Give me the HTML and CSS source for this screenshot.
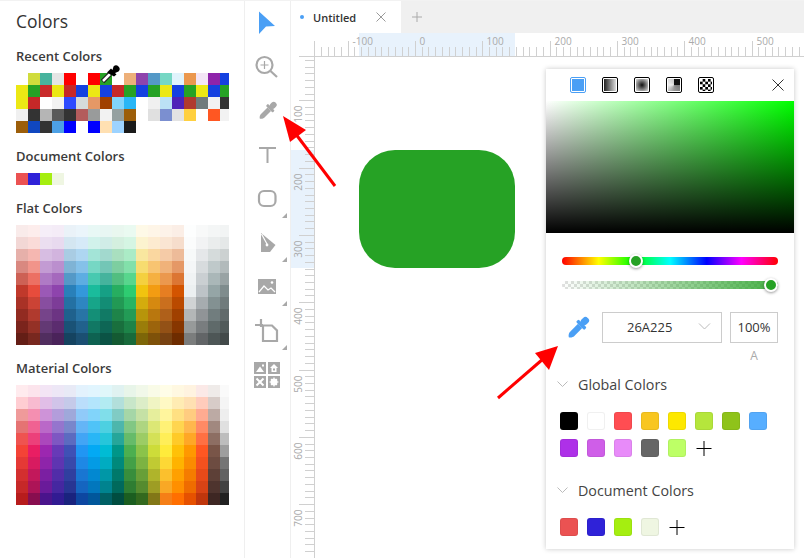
FILE: index.html
```html
<!DOCTYPE html>
<html>
<head>
  <meta charset="utf-8">
  <title>Colors</title>
  <link rel="stylesheet" href="styles.css">
</head>
<body>
  <svg class="defs" width="0" height="0">
    <symbol id="dropper" viewBox="0 0 24 24">
      <g transform="rotate(45 12 12)">
        <rect x="8.5" y="-2" width="7" height="8.500" rx="3.200"/>
        <rect x="6.200" y="5.500" width="11.600" height="3.600" rx="1.200"/>
        <path d="M9 9h6v11.500c0 1-1 3.500-3 4.500-2-1-3-3.500-3-4.500z"/>
      </g>
    </symbol>
  </svg>

  <div class="app">
    <aside class="side">
      <h1>Colors</h1>
      <h2>Recent Colors</h2>
      <div class="grid" id="recent"></div>
      <h2>Document Colors</h2>
      <div class="grid" id="docs"></div>
      <h2>Flat Colors</h2>
      <div class="grid" id="flat"></div>
      <h2>Material Colors</h2>
      <div class="grid" id="material"></div>
    </aside>

    <nav class="tools">
      <svg viewBox="0 0 45 44"><path class="blue" d="M14 11.500 30 26 21 26.500 14 34z"/></svg>
      <svg viewBox="0 0 45 44">
        <circle class="line" cx="19.500" cy="21" r="8"/>
        <path class="line" d="M25.500 27 32 33"/>
        <path class="thin" d="M19.500 17v8M15.500 21h8"/>
      </svg>
      <svg viewBox="0 0 45 44"><use href="#dropper" class="gray" x="12.500" y="13" width="20" height="20"/></svg>
      <svg viewBox="0 0 45 44"><path class="gray" d="M14 15h17v2H23.500v14h-2V17H14z"/></svg>
      <svg viewBox="0 0 45 44">
        <rect class="line" x="14" y="15" width="16.500" height="15" rx="5"/>
        <path class="gray" d="M42 37v5h-5z"/>
      </svg>
      <svg viewBox="0 0 45 44">
        <path class="gray" d="M16 13 30.500 25 25 32H16z"/>
        <path class="nib" d="M16.500 14 22 24"/>
        <circle class="dot" cx="22" cy="25" r="1.400"/>
        <path class="gray" d="M42 37v5h-5z"/>
      </svg>
      <svg viewBox="0 0 45 44">
        <rect class="gray" x="13" y="15" width="18" height="15"/>
        <path class="nib" d="M14 28 19 22 23 26 26 24 30 28"/>
        <circle class="dot" cx="27" cy="18.500" r="1.300"/>
        <path class="gray" d="M42 37v5h-5z"/>
      </svg>
      <svg viewBox="0 0 45 44">
        <path class="line" d="M10 17h8M16 11v8M18 17.500h9l5 5V33H18z"/>
        <path class="gray" d="M42 37v5h-5z"/>
      </svg>
      <svg viewBox="0 0 45 44">
        <rect class="gray" x="9" y="10" width="12" height="12"/>
        <rect class="gray" x="23" y="10" width="12" height="12"/>
        <rect class="gray" x="9" y="24" width="12" height="12"/>
        <rect class="gray" x="23" y="24" width="12" height="12"/>
        <path class="dot" d="M11 20 15 14.500 19 20zM17 12.500h2v2h-2zM29 12 33 16H31.500V20H26.500V16H25z"/>
        <rect class="gap" x="28" y="16.500" width="2" height="2"/>
        <path class="cross" d="M11.500 26.500l7 7M18.500 26.500l-7 7"/>
        <circle class="dot" cx="29" cy="30" r="3.500"/>
        <path class="nib" d="M29 25.500v9M24.500 30h9M26 27l6 6M32 27l-6 6"/>
      </svg>
    </nav>

    <main class="main">
      <div class="tabs">
        <div class="tab">
          <i class="tab-dot"></i>
          <span class="tab-name">Untitled</span>
          <svg class="tab-x" width="10" height="10" viewBox="0 0 10 10"><path d="M.5.5l9 9M9.500.5l-9 9"/></svg>
        </div>
        <svg class="tab-plus" width="10" height="10" viewBox="0 0 10 10"><path d="M5 0v10M0 5h10"/></svg>
      </div>

      <div class="board">
        <svg class="rulers" id="rulers" width="513" height="525"></svg>
        <div class="shape"></div>

        <section class="panel">
          <header class="modes">
            <span class="mode mode-on"><i class="fill-solid"></i></span>
            <span class="mode"><i class="fill-linear"></i></span>
            <span class="mode"><i class="fill-radial"></i></span>
            <span class="mode"><i class="fill-angle"></i></span>
            <span class="mode"><i class="fill-check"></i></span>
            <svg class="close" width="12" height="12" viewBox="0 0 12 12"><path d="M.5.5l11 11M11.500.5l-11 11"/></svg>
          </header>
          <div class="picker"></div>

          <div class="slider hue"><b class="thumb thumb-hue"></b></div>
          <div class="slider alpha"><b class="thumb thumb-alpha"></b></div>

          <div class="values">
            <svg class="pick" width="24" height="24"><use href="#dropper" width="24" height="24"/></svg>
            <div class="field hex">
              <span>26A225</span>
              <svg width="13" height="7" viewBox="0 0 13 7"><path d="M1 .5l5.500 5.500L12 .5"/></svg>
            </div>
            <div class="field pct">100%</div>
          </div>
          <div class="alpha-label">A</div>

          <div class="group-head">
            <svg width="11" height="6" viewBox="0 0 11 6"><path d="M.5.500 5.500 5.500 10.500.5"/></svg>
            <span>Global Colors</span>
          </div>
          <div class="chips">
            <i class="chip" style="background:#000"></i>
            <i class="chip" style="background:#fff"></i>
            <i class="chip" style="background:#ff4d52"></i>
            <i class="chip" style="background:#f8c620"></i>
            <i class="chip" style="background:#fde800"></i>
            <i class="chip" style="background:#b5e63c"></i>
            <i class="chip" style="background:#8fc31a"></i>
            <i class="chip" style="background:#57aeff"></i>
            <i class="chip" style="background:#ae30e8"></i>
            <i class="chip" style="background:#cf5ee8"></i>
            <i class="chip" style="background:#e88bf9"></i>
            <i class="chip" style="background:#666"></i>
            <i class="chip" style="background:#bdff66"></i>
            <svg class="add" width="18" height="18" viewBox="0 0 18 18"><path d="M1.500 9.500h15M9 2v15"/></svg>
          </div>

          <div class="group-head group-doc">
            <svg width="11" height="6" viewBox="0 0 11 6"><path d="M.5.500 5.500 5.500 10.500.5"/></svg>
            <span>Document Colors</span>
          </div>
          <div class="chips">
            <i class="chip" style="background:#eb5252"></i>
            <i class="chip" style="background:#2f22d8"></i>
            <i class="chip" style="background:#a5ee10"></i>
            <i class="chip" style="background:#eff6e2"></i>
            <svg class="add" width="18" height="18" viewBox="0 0 18 18"><path d="M1.500 9.500h15M9 2v15"/></svg>
          </div>
        </section>
      </div>
    </main>

    <!-- callouts and the cursor lie over everything -->
    <svg class="notes" width="804" height="558">
      <path class="red-line" d="M335 186 295 133"/>
      <path class="red" d="M283 116 306 130 290 142z"/>
      <path class="red-line" d="M498 398 543 359"/>
      <path class="red" d="M558 346 549 370 535 353z"/>
      <path class="cursor-out" d="M102.500 81.500 110 74"/>
      <path class="cursor-in" d="M103 81 110 74"/>
      <path class="cursor-head" d="M107 72.500 111 68.500 112.500 70 113.500 66.500a2.500 2.500 0 0 1 5 5L115 73 116.500 74.500 114 76.500z"/>
    </svg>
  </div>

  <script src="script.js"></script>
</body>
</html>
```

FILE: styles.css
```css
* {
  box-sizing: border-box;
}

body {
  margin: 0;
  background: #fff;
  font-family: "Open Sans", "Noto Sans", sans-serif;
  color: #333;
}

.defs {
  position: absolute;
}

.app {
  position: relative;
  display: flex;
  width: 804px;
  height: 558px;
  overflow: hidden;
  border-top: 1px solid #f2f2f2;
}

/* left panel */
.side {
  width: 245px;
  flex: none;
  padding: 8px 0 0 16px;
  border-right: 1px solid #efefef;
}

.side h1 {
  margin: 0;
  height: 24px;
  font-size: 17.5px;
  line-height: 24px;
  font-weight: 500;
  color: #333;
}

.side h2 {
  margin: 13px 0 7px;
  height: 20px;
  font-size: 13px;
  line-height: 20px;
  font-weight: 600;
  color: #3a3a3a;
}

.grid {
  display: grid;
  grid-template-columns: repeat(18, 12px);
  grid-auto-rows: 12px;
  width: 213px;
  overflow: hidden;
}

/* tools */
.tools {
  width: 46px;
  flex: none;
  display: flex;
  flex-direction: column;
  border-right: 1px solid #efefef;
  margin-top: -1px;
}

.tools svg {
  width: 45px;
  height: 44px;
  flex: none;
  display: block;
}

.blue {
  fill: #4a9ff5;
}

.gray {
  fill: #a8a8a8;
}

.line {
  fill: none;
  stroke: #a8a8a8;
  stroke-width: 2.2;
}

.thin {
  fill: none;
  stroke: #a8a8a8;
  stroke-width: 1.2;
}

.nib {
  fill: none;
  stroke: #fff;
  stroke-width: 1.2;
}

.cross {
  fill: none;
  stroke: #fff;
  stroke-width: 2;
}

.dot {
  fill: #fff;
}

.gap {
  fill: #a8a8a8;
}

/* tabs */
.main {
  flex: 1;
  display: flex;
  flex-direction: column;
  min-width: 0;
}

.tabs {
  height: 32px;
  flex: none;
  display: flex;
  align-items: center;
  background: #f0f0f0;
}

.tab {
  width: 110px;
  height: 32px;
  display: flex;
  align-items: center;
  background: #fff;
  padding-left: 9px;
}

.tab-dot {
  width: 4px;
  height: 4px;
  border-radius: 50%;
  background: #4a9ff5;
}

.tab-name {
  margin-left: 9px;
  font-size: 11px;
  font-weight: 600;
  color: #333;
}

.tab-x {
  margin-left: 20px;
}

.tab-x path {
  stroke: #999;
  fill: none;
}

.tab-plus {
  margin-left: 11px;
}

.tab-plus path {
  stroke: #aaa;
  fill: none;
}

/* canvas */
.board {
  position: relative;
  flex: 1;
}

.rulers {
  display: block;
}

.rulers line {
  stroke: #d0d0d0;
}

.rulers text {
  font-size: 10px;
  fill: #aaa;
}

.hl {
  fill: #e8f2fc;
}

.shape {
  position: absolute;
  left: 68px;
  top: 117px;
  width: 156px;
  height: 118px;
  border-radius: 36px;
  background: #26a225;
}

/* color popover */
.panel {
  position: absolute;
  left: 255px;
  top: 36px;
  width: 248px;
  height: 480px;
  background: #fff;
  box-shadow: 0 0 5px rgba(0, 0, 0, .22);
}

.modes {
  position: relative;
  height: 32px;
  display: flex;
  align-items: center;
  gap: 16px;
  padding: 0 0 0 24px;
}

.mode {
  width: 16px;
  height: 16px;
  padding: 1px;
  border: 1px solid #000;
  border-radius: 2px;
}

.mode i {
  display: block;
  width: 100%;
  height: 100%;
}

.mode-on {
  border-color: #4a9ff5;
}

.fill-solid {
  background: #4a9ff5;
}

.fill-linear {
  background: linear-gradient(to right, #222, #ddd);
}

.fill-radial {
  background: radial-gradient(circle, #111, #ccc 90%);
}

.fill-angle {
  background: conic-gradient(#111 0 25%, #777 25%, #999 50%, #eee 75%, #ccc 100%);
}

.fill-check {
  background: repeating-conic-gradient(#000 0 25%, #fff 0 50%) 0 0 / 5.300px 5.300px;
}

.close {
  position: absolute;
  right: 10px;
  top: 10px;
}

.close path {
  stroke: #333;
  fill: none;
}

.picker {
  height: 132px;
  background: linear-gradient(to bottom, transparent, #000), linear-gradient(to right, #fff, #0f0);
}

.slider {
  position: relative;
  height: 8px;
  margin: 0 16px;
  border-radius: 4px;
}

.hue {
  margin-top: 24px;
  background: linear-gradient(to right, #f00, #ff0 17%, #0f0 33%, #0ff 50%, #00f 67%, #f0f 83%, #f00);
}

.alpha {
  margin-top: 16px;
  background: linear-gradient(to right, rgba(38, 162, 37, 0), rgba(38, 162, 37, .85)), repeating-conic-gradient(#e0e0e0 0 25%, #fff 0 50%) 0 0 / 6px 6px;
}

.thumb {
  position: absolute;
  top: -3px;
  width: 14px;
  height: 14px;
  border: 2px solid #fff;
  border-radius: 50%;
  background: #26a225;
  box-shadow: 0 1px 3px rgba(0, 0, 0, .4);
}

.thumb-hue {
  left: 67px;
}

.thumb-alpha {
  left: 202px;
}

.values {
  display: flex;
  align-items: center;
  gap: 8px;
  height: 31px;
  margin: 23px 16px 0;
}

.pick {
  width: 24px;
  margin: 0 4px 0 4px;
  fill: #4a9ff5;
}

.field {
  height: 31px;
  border: 1px solid #ccc;
  font-size: 13px;
  line-height: 29px;
}

.hex {
  width: 120px;
  position: relative;
  padding-left: 24px;
}

.hex svg {
  position: absolute;
  right: 10px;
  top: 10px;
}

.hex path,
.group-head path {
  fill: none;
  stroke: #bbb;
}

.pct {
  width: 48px;
  text-align: center;
}

.alpha-label {
  width: 48px;
  margin: 6px 0 0 184px;
  text-align: center;
  font-size: 12px;
  line-height: 14px;
  color: #aaa;
}

.group-head {
  display: flex;
  align-items: center;
  gap: 10px;
  height: 20px;
  margin: 11px 0 18px 11px;
  font-size: 14.300px;
  color: #444;
}

.group-doc {
  margin-top: 23px;
}

.chips {
  display: grid;
  grid-template-columns: repeat(8, 18px);
  grid-auto-rows: 18px;
  gap: 9px;
  margin-left: 14px;
}

.chip {
  display: block;
  border-radius: 3px;
  border: 1px solid rgba(0, 0, 0, .06);
}

.add path {
  stroke: #000;
  fill: none;
}

/* notes */
.notes {
  position: absolute;
  left: 0;
  top: -1px;
  pointer-events: none;
}

.red {
  fill: #f00;
}

.red-line {
  stroke: #f00;
  stroke-width: 3;
  fill: none;
}

.cursor-out {
  stroke: #222;
  stroke-width: 5;
  fill: none;
}

.cursor-in {
  stroke: #fff;
  stroke-width: 2.500;
  fill: none;
}

.cursor-head {
  fill: #000;
}
```

FILE: script.js
```js
// palette tables, one string per row or column
var recent = [
  '#fff #d0dc3c #47b39d #e5e5e5 #f00 #fff #f00 #26a225 #fff #edb07a #8e44ad #5499c7 #76d7c4 #e0f3fc #eb984e #f3e5f5 #8e24aa #1541e0',
  '#ece814 #26a225 #c92a2a #ece814 #c62828 #1541e0 #ece814 #1541e0 #c62828 #26a225 #1541e0 #26a225 #ece814 #1541e0 #26a225 #ece814 #1541e0 #26a225',
  '#ece814 #c62828 #fff #f2f2f2 #2d4bff #d5dbdb #e59866 #a04000 #81d4fa #29b6f6 #fff #f0f0f0 #bbe1f5 #4f22b8 #b03a2e #707b7c #f2f2f2 #333',
  '#f0f0f0 #333 #b5b5b5 #595959 #333 #b35c5c #999b9b #f2f2f2 #95a0a0 #9c5e0a #fff #e0e0e0 #7b8fd0 #e3e3e3 #ffd040 #fff #ff5722 #f2f2f2',
  '#9c5e0a #1047c0 #333 #4da0e5 #00f #fff #00f #ffe0b2 #9dd3ff #1a1a1a'
];

var flat = [
  'F9EBEA F2D7D5 E6B0AA D98880 CD6155 C0392B A93226 922B21 7B241C 641E16',
  'FDEDEC FADBD8 F5B7B1 F1948A EC7063 E74C3C CB4335 B03A2E 943126 78281F',
  'F5EEF8 EBDEF0 D7BDE2 C39BD3 AF7AC5 9B59B6 884EA0 76448A 633974 512E5F',
  'F4ECF7 E8DAEF D2B4DE BB8FCE A569BD 8E44AD 7D3C98 6C3483 5B2C6F 4A235A',
  'EAF2F8 D4E6F1 A9CCE3 7FB3D5 5499C7 2980B9 2471A3 1F618D 1A5276 154360',
  'EBF5FB D6EAF8 AED6F1 85C1E9 5DADE2 3498DB 2E86C1 2874A6 21618C 1B4F72',
  'E8F8F5 D1F2EB A3E4D7 76D7C4 48C9B0 1ABC9C 17A589 148F77 117864 0E6251',
  'E8F6F3 D0ECE7 A2D9CE 73C6B6 45B39D 16A085 138D75 117A65 0E6655 0B5345',
  'E9F7EF D4EFDF A9DFBF 7DCEA0 52BE80 27AE60 229954 1E8449 196F3D 145A32',
  'EAFAF1 D5F5E3 ABEBC6 82E0AA 58D68D 2ECC71 28B463 239B56 1D8348 186A3B',
  'FEF9E7 FCF3CF F9E79F F7DC6F F4D03F F1C40F D4AC0D B7950B 9A7D0A 7D6608',
  'FEF5E7 FDEBD0 FAD7A0 F8C471 F5B041 F39C12 D68910 B9770E 9C640C 7E5109',
  'FDF2E9 FAE5D3 F5CBA7 F0B27A EB984E E67E22 CA6F1E AF601A 935116 784212',
  'FBEEE6 F6DDCC EDBB99 E59866 DC7633 D35400 BA4A00 A04000 873600 6E2C00',
  'FDFEFE FBFCFC F7F9F9 F4F6F7 F0F3F4 ECF0F1 D0D3D4 B3B6B7 979A9A 7B7D7D',
  'F8F9F9 F2F3F4 E5E7E9 D7DBDD CACFD2 BDC3C7 A6ACAF 909497 797D7F 626567',
  'F4F6F6 EAEDED D5DBDB BFC9CA AAB7B8 95A5A6 839192 717D7E 5F6A6A 4D5656',
  'F2F4F4 E5E8E8 CCD1D1 B2BABB 99A3A4 7F8C8D 707B7C 616A6B 515A5A 424949'
];

var material = [
  'FFEBEE FFCDD2 EF9A9A E57373 EF5350 F44336 E53935 D32F2F C62828 B71C1C',
  'FCE4EC F8BBD0 F48FB1 F06292 EC407A E91E63 D81B60 C2185B AD1457 880E4F',
  'F3E5F5 E1BEE7 CE93D8 BA68C8 AB47BC 9C27B0 8E24AA 7B1FA2 6A1B9A 4A148C',
  'EDE7F6 D1C4E9 B39DDB 9575CD 7E57C2 673AB7 5E35B1 512DA8 4527A0 311B92',
  'E8EAF6 C5CAE9 9FA8DA 7986CB 5C6BC0 3F51B5 3949AB 303F9F 283593 1A237E',
  'E3F2FD BBDEFB 90CAF9 64B5F6 42A5F5 2196F3 1E88E5 1976D2 1565C0 0D47A1',
  'E1F5FE B3E5FC 81D4FA 4FC3F7 29B6F6 03A9F4 039BE5 0288D1 0277BD 01579B',
  'E0F7FA B2EBF2 80DEEA 4DD0E1 26C6DA 00BCD4 00ACC1 0097A7 00838F 006064',
  'E0F2F1 B2DFDB 80CBC4 4DB6AC 26A69A 009688 00897B 00796B 00695C 004D40',
  'E8F5E9 C8E6C9 A5D6A7 81C784 66BB6A 4CAF50 43A047 388E3C 2E7D32 1B5E20',
  'F1F8E9 DCEDC8 C5E1A5 AED581 9CCC65 8BC34A 7CB342 689F38 558B2F 33691E',
  'F9FBE7 F0F4C3 E6EE9C DCE775 D4E157 CDDC39 C0CA33 AFB42B 9E9D24 827717',
  'FFFDE7 FFF9C4 FFF59D FFF176 FFEE58 FFEB3B FDD835 FBC02D F9A825 F57F17',
  'FFF8E1 FFECB3 FFE082 FFD54F FFCA28 FFC107 FFB300 FFA000 FF8F00 FF6F00',
  'FFF3E0 FFE0B2 FFCC80 FFB74D FFA726 FF9800 FB8C00 F57C00 EF6C00 E65100',
  'FBE9E7 FFCCBC FFAB91 FF8A65 FF7043 FF5722 F4511E E64A19 D84315 BF360C',
  'EFEBE9 D7CCC8 BCAAA4 A1887F 8D6E63 795548 6D4C41 5D4037 4E342E 3E2723',
  'FAFAFA F5F5F5 EEEEEE E0E0E0 BDBDBD 9E9E9E 757575 616161 424242 212121'
];

function fillGrid(id, colors) {
  var grid = document.getElementById(id);
  colors.forEach(function (c) {
    var cell = document.createElement('i');
    cell.style.background = c;
    grid.appendChild(cell);
  });
}

function rowsToList(rows) {
  return rows.join(' ').split(' ');
}

function columnsToList(cols) {
  var out = [];
  var table = cols.map(function (c) { return c.split(' '); });
  for (var r = 0; r < 10; r++) {
    for (var c = 0; c < table.length; c++) {
      out.push('#' + table[c][r]);
    }
  }
  return out;
}

fillGrid('recent', rowsToList(recent));
fillGrid('docs', ['#eb5252', '#2f22d8', '#a5ee10', '#eff6e2']);
fillGrid('flat', columnsToList(flat));
fillGrid('material', columnsToList(material));

// rulers: the svg starts at page 291,33
var svg = '';
var step = 6.73;
var zeroX = 415 - 291;

svg += '<rect class="hl" x="68" y="0" width="156" height="23"/>';
svg += '<rect class="hl" x="0" y="117" width="23" height="118"/>';

for (var i = -18; i < 60; i++) {
  var x = Math.round(zeroX + i * step) + 0.5;
  if (x < 24) continue;
  var major = i % 10 === 0;
  svg += '<line x1="' + x + '" x2="' + x + '" y1="' + (major ? 8 : 14) + '" y2="23"/>';
  if (major) {
    svg += '<text x="' + (x + 4) + '" y="12">' + (i * 10) + '</text>';
  }
}

for (var j = 4; j < 80; j++) {
  var y = Math.round(j * step) + 0.5;
  var big = j % 10 === 0;
  svg += '<line x1="' + (big ? 8 : 14) + '" x2="23" y1="' + y + '" y2="' + y + '"/>';
  if (big && j <= 70) {
    svg += '<text text-anchor="end" transform="translate(11 ' + (y + 5) + ') rotate(-90)">' + (j * 10) + '</text>';
  }
}

svg += '<line x1="8" x2="513" y1="23.5" y2="23.5"/>';
svg += '<line x1="23.5" x2="23.5" y1="8" y2="525"/>';
document.getElementById('rulers').innerHTML = svg;
```
